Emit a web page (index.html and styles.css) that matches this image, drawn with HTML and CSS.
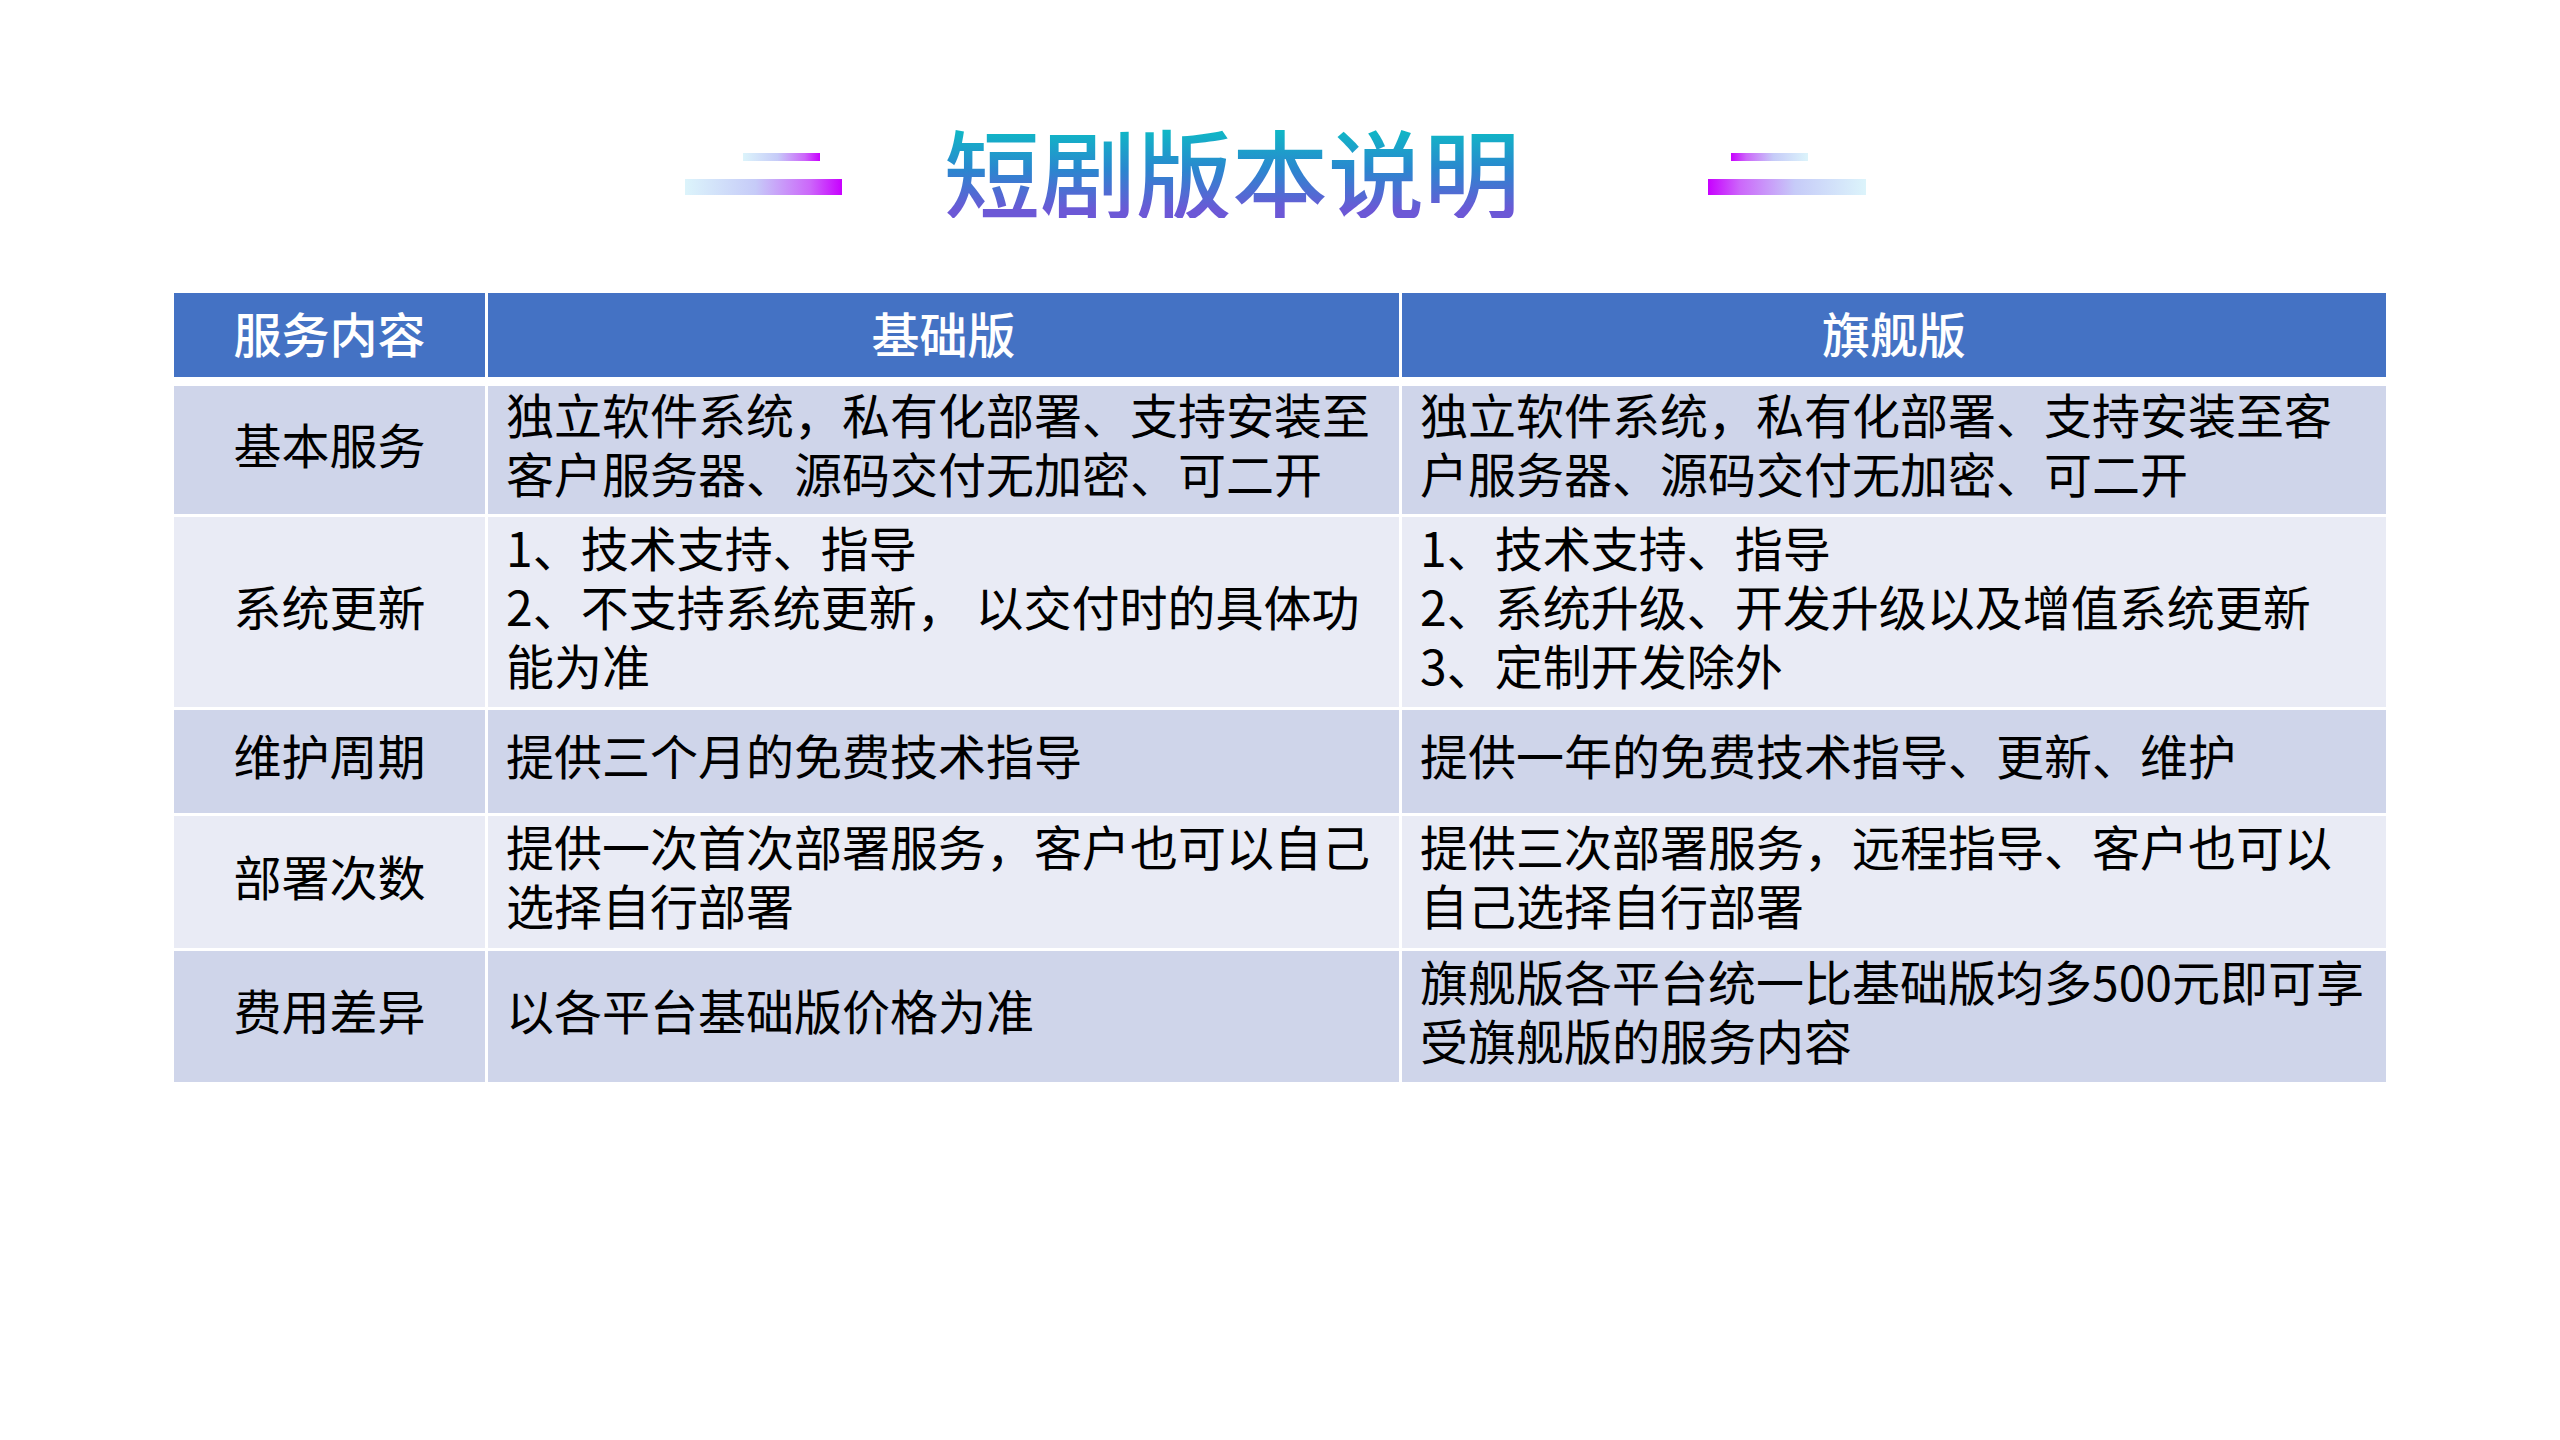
FILE: index.html
```html
<!DOCTYPE html>
<html lang="zh-CN">
<head>
<meta charset="utf-8">
<title>短剧版本说明</title>
<link rel="stylesheet" href="styles.css">
</head>
<body>
<div class="page">
  <div class="title-row">
    <div class="deco deco-left">
      <span class="bar bar-short"></span>
      <span class="bar bar-long"></span>
    </div>
    <h1 class="title">短剧版本说明</h1>
    <div class="deco deco-right">
      <span class="bar bar-short"></span>
      <span class="bar bar-long"></span>
    </div>
  </div>

  <div class="table">
    <div class="cell head center">服务内容</div>
    <div class="cell head center">基础版</div>
    <div class="cell head center">旗舰版</div>

    <div class="cell dark center">基本服务</div>
    <div class="cell dark">独立软件系统，私有化部署、支持安装至<br>客户服务器、源码交付无加密、可二开</div>
    <div class="cell dark">独立软件系统，私有化部署、支持安装至客<br>户服务器、源码交付无加密、可二开</div>

    <div class="cell light center">系统更新</div>
    <div class="cell light">1、技术支持、指导<br>2、不支持系统更新， 以交付时的具体功<br>能为准</div>
    <div class="cell light">1、技术支持、指导<br>2、系统升级、开发升级以及增值系统更新<br>3、定制开发除外</div>

    <div class="cell dark center">维护周期</div>
    <div class="cell dark">提供三个月的免费技术指导</div>
    <div class="cell dark">提供一年的免费技术指导、更新、维护</div>

    <div class="cell light center">部署次数</div>
    <div class="cell light">提供一次首次部署服务，客户也可以自己<br>选择自行部署</div>
    <div class="cell light">提供三次部署服务，远程指导、客户也可以<br>自己选择自行部署</div>

    <div class="cell dark center">费用差异</div>
    <div class="cell dark">以各平台基础版价格为准</div>
    <div class="cell dark">旗舰版各平台统一比基础版均多500元即可享<br>受旗舰版的服务内容</div>
  </div>
</div>
</body>
</html>
```

FILE: styles.css
```css
html, body {
  margin: 0;
  padding: 0;
  background: #ffffff;
}

body {
  font-family: "Noto Sans CJK SC", "Noto Sans", sans-serif;
  color: #000000;
}

.page {
  width: 2560px;
  height: 1440px;
  padding-top: 122px;
  box-sizing: border-box;
}

.title-row {
  display: flex;
  justify-content: center;
  align-items: flex-start;
}

.deco {
  display: flex;
  flex-direction: column;
  gap: 18px;
  margin-top: 31px;
}

.deco-left {
  align-items: flex-end;
  margin-right: 102px;
}

.deco-right {
  align-items: flex-start;
  margin-left: 188px;
  margin-right: 9px;
}

.bar {
  display: block;
}

.bar-short {
  width: 77px;
  height: 8px;
}

.bar-long {
  width: 157px;
  height: 16px;
}

.deco-left .bar-short {
  margin-right: 22px;
}

.deco-right .bar-short {
  margin-left: 23px;
}

.deco-right .bar-long {
  width: 158px;
}

.deco-left .bar {
  background: linear-gradient(to right, #dcf4fb 0%, #c6cbf8 45%, #cc66fa 80%, #c800ff 100%);
}

.deco-right .bar {
  background: linear-gradient(to left, #dcf4fb 0%, #c6cbf8 45%, #cc66fa 80%, #c800ff 100%);
}

.title {
  margin: 0;
  font-size: 96px;
  line-height: 96px;
  font-weight: 500;
  letter-spacing: 0;
  white-space: nowrap;
  background: linear-gradient(to bottom, #10b6c6 10%, #2b86cf 50%, #6c58d6 92%);
  -webkit-background-clip: text;
  background-clip: text;
  color: transparent;
}

.table {
  margin: 75px auto 0;
  width: 2212px;
  display: grid;
  grid-template-columns: 311px 911px 984px;
  grid-template-rows: 90px 128px 190px 103px 132px 131px;
  column-gap: 3px;
  row-gap: 3px;
  background: #ffffff;
}

.cell {
  display: flex;
  align-items: center;
  padding: 0 12px 14px 18px;
  font-size: 48px;
  line-height: 59px;
  white-space: nowrap;
  box-sizing: border-box;
}

.center {
  justify-content: center;
  padding: 0 0 14px 0;
}

.head {
  height: 84px;
  align-self: start;
  background: #4472c4;
  color: #ffffff;
  font-weight: 500;
  padding-bottom: 6px;
}

.dark {
  background: #cfd5ea;
}

.light {
  background: #e9ebf5;
}
```
